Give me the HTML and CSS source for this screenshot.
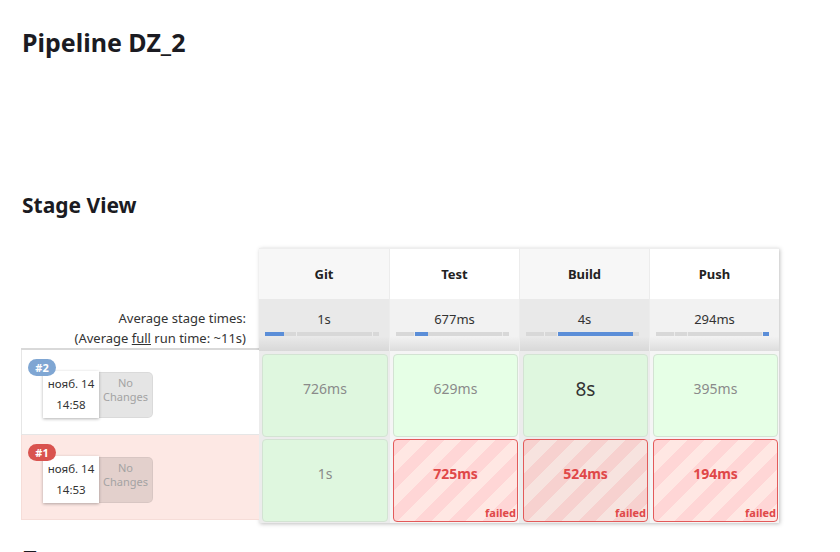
FILE: index.html
```html
<!DOCTYPE html>
<html lang="ru">
<head>
<meta charset="utf-8">
<title>Pipeline DZ_2</title>
<link rel="stylesheet" href="styles.css">
</head>
<body>
<div class="page">
  <h1 class="title">Pipeline DZ_2</h1>
  <h2 class="section">Stage View</h2>

  <div class="stage-view">
    <div class="runs">
      <div class="runs-head"></div>
      <div class="avg-label">Average stage times:<br>(Average <u>full</u> run time: ~11s)</div>
      <div class="run">
        <span class="badge badge-ok">#2</span>
        <div class="date"><div>нояб. 14</div><div>14:58</div></div>
        <div class="changes">No<br>Changes</div>
      </div>
      <div class="run run-failed">
        <span class="badge badge-failed">#1</span>
        <div class="date"><div>нояб. 14</div><div>14:53</div></div>
        <div class="changes">No<br>Changes</div>
      </div>
    </div>

    <div class="stages">
      <div class="col odd">
        <div class="head">Git</div>
        <div class="avg">1s
          <div class="bar"><span class="seg cur" style="width:16.7%"></span><span class="seg" style="width:11.3%"></span><span class="seg" style="width:67%"></span><span class="seg" style="width:5%"></span></div>
        </div>
        <div class="body">
          <div class="cell ok">726ms</div>
          <div class="cell ok">1s</div>
        </div>
      </div>
      <div class="col even">
        <div class="head">Test</div>
        <div class="avg">677ms
          <div class="bar"><span class="seg" style="width:16.7%"></span><span class="seg cur" style="width:11.3%"></span><span class="seg" style="width:67%"></span><span class="seg" style="width:5%"></span></div>
        </div>
        <div class="body">
          <div class="cell ok">629ms</div>
          <div class="cell fail">725ms<span class="status">failed</span></div>
        </div>
      </div>
      <div class="col odd">
        <div class="head">Build</div>
        <div class="avg">4s
          <div class="bar"><span class="seg" style="width:16.7%"></span><span class="seg" style="width:11.3%"></span><span class="seg cur" style="width:67%"></span><span class="seg" style="width:5%"></span></div>
        </div>
        <div class="body">
          <div class="cell ok big">8s</div>
          <div class="cell fail">524ms<span class="status">failed</span></div>
        </div>
      </div>
      <div class="col even">
        <div class="head">Push</div>
        <div class="avg">294ms
          <div class="bar"><span class="seg" style="width:16.7%"></span><span class="seg" style="width:11.3%"></span><span class="seg" style="width:67%"></span><span class="seg cur" style="width:5%"></span></div>
        </div>
        <div class="body">
          <div class="cell ok">395ms</div>
          <div class="cell fail">194ms<span class="status">failed</span></div>
        </div>
      </div>
    </div>
  </div>

  <h2 class="section section-next">Постоянные ссылки</h2>
</div>
</body>
</html>
```

FILE: styles.css
```css
* { box-sizing: border-box; }

body {
  margin: 0;
  font-family: "Noto Sans", "Open Sans", sans-serif;
  color: #333;
  background: #fff;
}

.page {
  padding: 27px 0 0 21px;
}

.title {
  margin: 0;
  padding-left: 1px;
  font-size: 25px;
  line-height: 30px;
  font-weight: 700;
  color: #1b1b22;
}

.section {
  margin: 135px 0 0;
  padding-left: 1px;
  font-size: 21px;
  line-height: 26px;
  font-weight: 700;
  color: #1b1b22;
}

.section-next {
  margin-top: 22px;
}

.stage-view {
  display: flex;
  align-items: flex-start;
  margin-top: 30px;
}

/* left column: runs */
.runs {
  width: 238px;
}

.runs-head {
  height: 50px;
}

.avg-label {
  height: 52px;
  padding: 10px 13px 0 0;
  text-align: right;
  font-size: 13px;
  line-height: 20px;
  color: #333;
  border-bottom: 2px solid #d9d9d9;
}

.run {
  position: relative;
  display: flex;
  align-items: flex-start;
  height: 85px;
  padding: 21px 0 0 21px;
  border-left: 1px solid #e6e6e6;
  border-bottom: 1px solid #e6e6e6;
  background: #fff;
}

.run-failed {
  background: #fde8e4;
  border-left-color: #f6ddd8;
  border-bottom-color: #f6ddd8;
}

.badge {
  position: absolute;
  top: 9px;
  left: 6px;
  z-index: 1;
  min-width: 28px;
  height: 17px;
  padding: 0 5px;
  border-radius: 9px;
  font-size: 11px;
  line-height: 17px;
  font-weight: 700;
  text-align: center;
  color: #fff;
}

.badge-ok { background: #7fa6d3; }
.badge-failed { background: #d9534f; }

.date {
  width: 56px;
  height: 47px;
  padding-top: 2px;
  background: #fff;
  box-shadow: 0 1px 3px rgba(0, 0, 0, 0.3);
  font-size: 11.5px;
  line-height: 21px;
  text-align: center;
  color: #333;
}

.changes {
  width: 54px;
  height: 46px;
  margin-top: 1px;
  padding-top: 3px;
  background: rgba(0, 0, 0, 0.1);
  border: 1px solid rgba(0, 0, 0, 0.05);
  border-left: 0;
  border-radius: 0 5px 5px 0;
  font-size: 11px;
  line-height: 14px;
  text-align: center;
  color: #a3a3a3;
}

/* stage grid */
.stages {
  display: grid;
  grid-template-columns: repeat(4, 130px);
  border-top: 1px solid #eee;
  box-shadow: 1px 1px 4px rgba(0, 0, 0, 0.25);
}

.col + .col {
  border-left: 1px solid #ececec;
}

.head {
  display: flex;
  align-items: center;
  justify-content: center;
  height: 50px;
  font-size: 13px;
  font-weight: 700;
  color: #222;
}

.odd .head { background: #f7f7f7; }
.even .head { background: #fff; }

.avg {
  height: 52px;
  padding-top: 11px;
  font-size: 13px;
  line-height: 18px;
  text-align: center;
  color: #333;
}

.odd .avg { background: linear-gradient(#e9e9e9 72%, #d8d8d8); }
.even .avg { background: linear-gradient(#f2f2f2 72%, #dddddd); }

.bar {
  display: flex;
  height: 4px;
  margin: 4px 10px 0 6px;
  background: #dadada;
}

.seg {
  height: 100%;
  background: #d8d8d8;
  border-right: 1px solid #ebebeb;
}

.seg:last-child { border-right: 0; }

.seg.cur {
  background: #5b8ed8;
  border-right-color: #5b8ed8;
}

.body {
  display: flex;
  flex-direction: column;
  gap: 2px;
  padding: 3px 1px 1px 3px;
}

.odd .body { background: #ececec; }
.even .body { background: #f5f5f5; }

.cell {
  position: relative;
  height: 83px;
  padding-top: 25px;
  border: 1px solid;
  border-radius: 4px;
  font-size: 14px;
  line-height: 18px;
  text-align: center;
}

.ok {
  background: #e6ffe6;
  border-color: #d3e3d3;
  color: #8a8a8a;
}

.odd .ok { background: #dff7df; }

.ok.big {
  font-size: 19px;
  color: #333;
}

.fail {
  border-color: #e25a5a;
  color: #e04848;
  font-weight: 700;
  background: repeating-linear-gradient(135deg, #ffd6d6 0 12px, #ffe7e3 12px 24px);
}

.odd .fail {
  background: repeating-linear-gradient(135deg, #f7d1cf 0 12px, #f7e3df 12px 24px);
}

.status {
  position: absolute;
  right: 1px;
  bottom: 2px;
  font-size: 11px;
  line-height: 13px;
  font-weight: 700;
}
```
